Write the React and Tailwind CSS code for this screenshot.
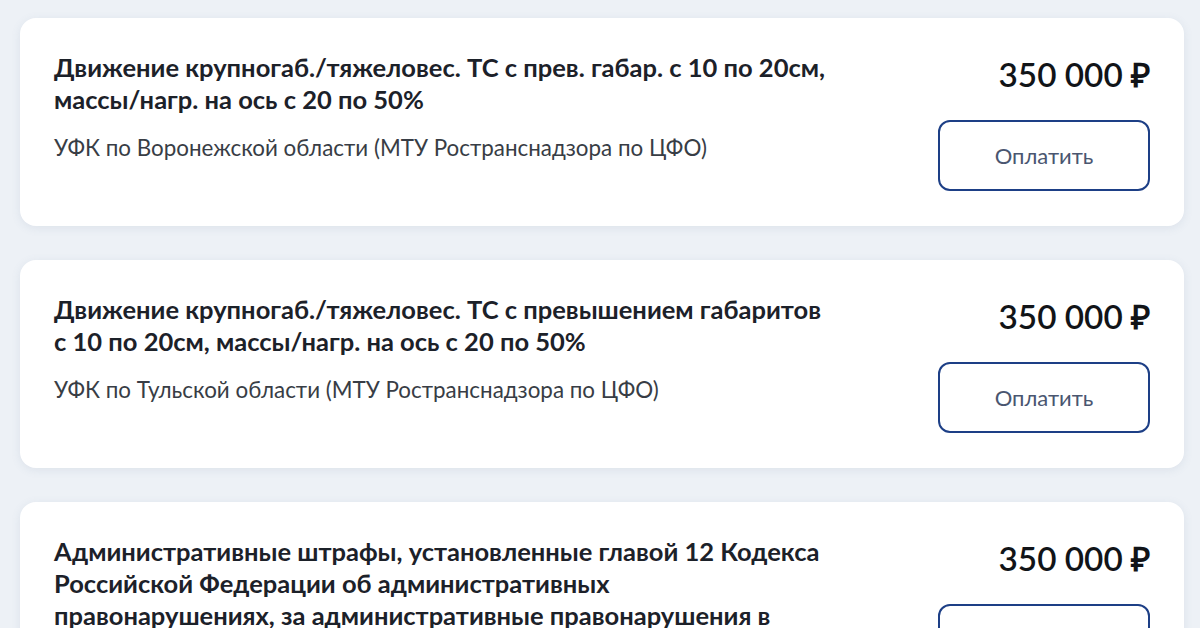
const items = [
  {
    title: 'Движение крупногаб./тяжеловес. ТС с прев. габар. с 10 по 20см, массы/нагр. на ось с 20 по 50%',
    org: 'УФК по Воронежской области (МТУ Ространснадзора по ЦФО)',
  },
  {
    title: 'Движение крупногаб./тяжеловес. ТС с превышением габаритов с 10 по 20см, массы/нагр. на ось с 20 по 50%',
    org: 'УФК по Тульской области (МТУ Ространснадзора по ЦФО)',
  },
  {
    title: 'Административные штрафы, установленные главой 12 Кодекса Российской Федерации об административных правонарушениях, за административные правонарушения в области дорожного движения',
    org: 'УФК по Московской области',
  },
];

function PaymentCard({ title, org }) {
  return (
    <div className="flex justify-between shrink-0 bg-white rounded-2xl shadow-[0_2px_10px_rgba(100,120,160,0.12)] px-[34px] pt-[33px] pb-[34px] min-h-[208px]">
      <div className="w-[776px]">
        <h3 className="text-[25.5px] leading-[32px] font-bold text-[#1c2129]">{title}</h3>
        <p className="mt-[19px] text-[22.4px] leading-[28px] text-[#383d45]">{org}</p>
      </div>
      <div className="flex flex-col items-end pt-[3px]">
        <div className="text-[33.3px] leading-[40px] font-semibold text-[#111418]">350 000 ₽</div>
        <button className="mt-[26px] w-[212px] h-[71px] rounded-xl border-2 border-[#1d3f86] text-[22px] text-[#4a5670]">
          Оплатить
        </button>
      </div>
    </div>
  );
}

export default function App() {
  return (
    <div className="bg-[#edf1f6] pl-[20px] pr-[16px] pt-[18px] flex flex-col gap-[34px] font-['Lato',sans-serif] h-[628px] overflow-hidden">
      {items.map((item, i) => (
        <PaymentCard key={i} {...item} />
      ))}
    </div>
  );
}
